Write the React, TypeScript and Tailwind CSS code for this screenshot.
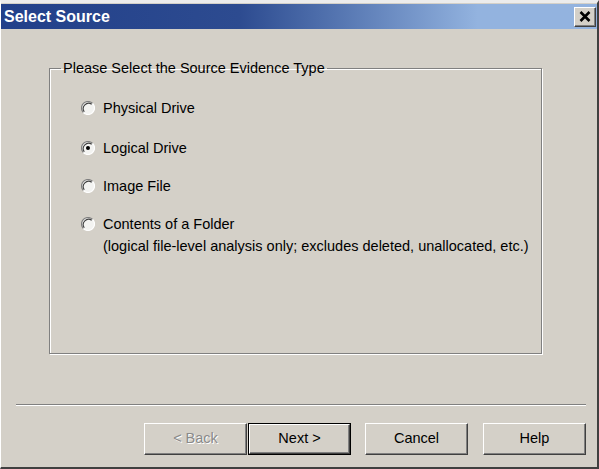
import { useState } from "react";

const options = [
  { id: "physical", label: "Physical Drive" },
  { id: "logical", label: "Logical Drive" },
  { id: "image", label: "Image File" },
  {
    id: "folder",
    label: "Contents of a Folder",
    note: "(logical file-level analysis only; excludes deleted, unallocated, etc.)",
  },
];

// klassischer Windows-Radiobutton
function Radio({ checked }: { checked: boolean }) {
  return (
    <svg width="14" height="14" viewBox="0 0 14 14" className="mt-[3px] shrink-0">
      <circle cx="7" cy="7" r="6.5" fill="#f3f3f1" />
      <path d="M2.4 11.6 A6.5 6.5 0 0 1 11.6 2.4" fill="none" stroke="#808080" strokeWidth="1.2" />
      <path d="M3.3 10.7 A5.3 5.3 0 0 1 10.7 3.3" fill="none" stroke="#404040" strokeWidth="1.1" />
      <path d="M11.6 2.4 A6.5 6.5 0 0 1 2.4 11.6" fill="none" stroke="#ffffff" strokeWidth="1.2" />
      {checked && <circle cx="7" cy="7" r="2" fill="#000" />}
    </svg>
  );
}

function Button({
  label,
  disabled,
  isDefault,
}: {
  label: string;
  disabled?: boolean;
  isDefault?: boolean;
}) {
  const inner = (
    <div className="flex h-full w-full items-center justify-center border border-t-white border-l-white border-r-[#404040] border-b-[#404040] bg-[#d4d0c8] shadow-[inset_-1px_-1px_0_#808080]">
      <span
        className={
          disabled
            ? "text-[#8a8a8a] [text-shadow:1px_1px_0_#fff]"
            : "text-black"
        }
      >
        {label}
      </span>
    </div>
  );
  if (isDefault) {
    return (
      <div className="h-[32px] w-[103px] border border-black">{inner}</div>
    );
  }
  return <div className="h-[32px] w-[103px]">{inner}</div>;
}

export default function App() {
  const [selected, setSelected] = useState("logical");

  return (
    <div
      className="flex h-[469px] w-[599px] flex-col border-t-[3px] border-l border-r-2 border-b-2 border-t-[#ececec] border-l-white border-r-[#404040] border-b-[#404040] bg-[#d4d0c8] text-[14.5px] text-black"
      style={{ fontFamily: '"Liberation Sans", Arial, sans-serif' }}
    >
      {/* Titelleiste */}
      <div className="mt-[1px] flex h-[25px] shrink-0 items-center justify-between bg-gradient-to-r from-[#22408a] via-[#2d4b90] via-40% to-[#93b3df] to-80% pl-[3px] pr-[1px]">
        <span className="text-[16px] font-bold text-white">Select Source</span>
        <div className="flex h-[20px] w-[22px] items-center justify-center border border-t-white border-l-white border-r-[#404040] border-b-[#404040] bg-[#d4d0c8] shadow-[inset_-1px_-1px_0_#808080]">
          <svg width="12" height="11" viewBox="0 0 12 11">
            <path d="M1.5 1 L10.5 10 M10.5 1 L1.5 10" stroke="black" strokeWidth="2.6" />
          </svg>
        </div>
      </div>

      <div className="flex flex-1 flex-col">
        <fieldset className="ml-[48px] mt-[31px] h-[294px] w-[493px] border border-[#808080] pl-[31px] shadow-[inset_1px_1px_0_#fff,1px_1px_0_#fff]">
          <legend className="-ml-[20px] px-[2px] leading-[16px]">
            Please Select the Source Evidence Type
          </legend>
          <div className="mt-[22px] flex flex-col">
            {options.map((opt, i) => (
              <div
                key={opt.id}
                className={
                  "flex cursor-default items-start gap-[8px] " +
                  (i === 0 ? "" : i === 1 ? "mt-[20px]" : "mt-[18px]")
                }
                onClick={() => setSelected(opt.id)}
              >
                <Radio checked={selected === opt.id} />
                <div className="flex flex-col leading-[20px]">
                  <span>{opt.label}</span>
                  {opt.note && (
                    <span className="mt-[2px]">{opt.note}</span>
                  )}
                </div>
              </div>
            ))}
          </div>
        </fieldset>

        <div className="ml-[15px] mt-[50px] h-[2px] w-[570px] border-t border-b border-t-[#808080] border-b-white" />

        <div className="ml-[143px] mt-[17px] flex">
          <Button label="< Back" disabled />
          <div className="ml-[1px]">
            <Button label="Next >" isDefault />
          </div>
          <div className="ml-[14px]">
            <Button label="Cancel" />
          </div>
          <div className="ml-[15px]">
            <Button label="Help" />
          </div>
        </div>
      </div>
    </div>
  );
}
